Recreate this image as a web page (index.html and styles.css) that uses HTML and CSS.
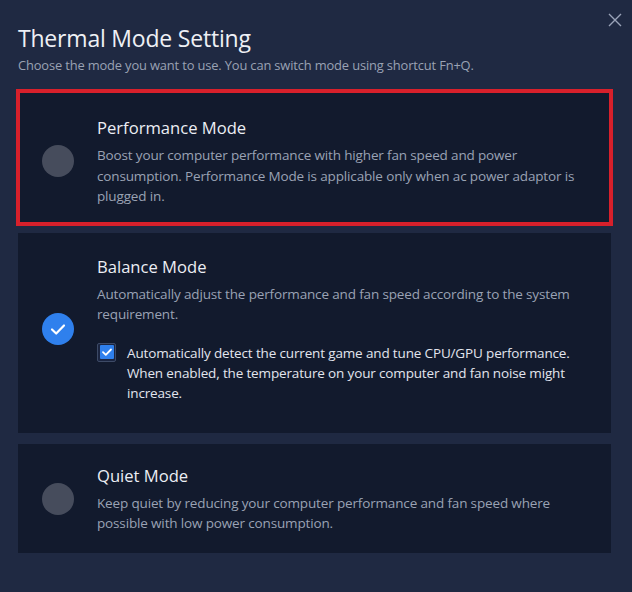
FILE: index.html
```html
<!DOCTYPE html>
<html lang="en">
<head>
<meta charset="utf-8">
<title>Thermal Mode Setting</title>
<link rel="stylesheet" href="styles.css">
</head>
<body>
<div class="dialog">
  <button class="close" aria-label="Close">
    <svg width="14" height="14" viewBox="0 0 14 14"><path d="M1 1 L13 13 M13 1 L1 13" stroke="#9aa3b8" stroke-width="1.4" fill="none"/></svg>
  </button>
  <h1 class="title">Thermal Mode Setting</h1>
  <p class="subtitle">Choose the mode you want to use. You can switch mode using shortcut Fn+Q.</p>

  <div class="modes">
    <div class="card card-highlight">
      <span class="radio"></span>
      <div class="body">
        <div class="name">Performance Mode</div>
        <div class="desc">Boost your computer performance with higher fan speed and power<br>consumption. Performance Mode is applicable only when ac power adaptor is<br>plugged in.</div>
      </div>
    </div>

    <div class="card card-balance">
      <span class="radio radio-on">
        <svg width="32" height="32" viewBox="0 0 32 32"><path d="M10 16.5 L14.2 20.5 L22 12.5" stroke="#fff" stroke-width="2.2" fill="none" stroke-linecap="round" stroke-linejoin="round"/></svg>
      </span>
      <div class="body">
        <div class="name">Balance Mode</div>
        <div class="desc">Automatically adjust the performance and fan speed according to the system<br>requirement.</div>
        <div class="option">
          <span class="checkbox">
            <span class="checkbox-fill">
              <svg width="14" height="14" viewBox="0 0 14 14"><path d="M3 7.2 L5.8 9.8 L11 4.5" stroke="#fff" stroke-width="1.8" fill="none" stroke-linecap="round" stroke-linejoin="round"/></svg>
            </span>
          </span>
          <span class="option-text">Automatically detect the current game and tune CPU/GPU performance.<br>When enabled, the temperature on your computer and fan noise might<br>increase.</span>
        </div>
      </div>
    </div>

    <div class="card card-quiet">
      <span class="radio"></span>
      <div class="body">
        <div class="name">Quiet Mode</div>
        <div class="desc">Keep quiet by reducing your computer performance and fan speed where<br>possible with low power consumption.</div>
      </div>
    </div>
  </div>
</div>
</body>
</html>
```

FILE: styles.css
```css
html, body {
  margin: 0;
  padding: 0;
  background: #1f2942;
}
body {
  font-family: "Open Sans", "Noto Sans", sans-serif;
  color: #e6e9f0;
  width: 632px;
  height: 592px;
  overflow: hidden;
}
.dialog {
  position: relative;
  padding: 22px 21px 0 18px;
}
.close {
  position: absolute;
  top: 12px;
  right: 9px;
  width: 16px;
  height: 16px;
  padding: 0;
  border: 0;
  background: transparent;
  display: flex;
  align-items: center;
  justify-content: center;
}
.title {
  margin: 0;
  font-size: 23px;
  font-weight: 400;
  line-height: 32px;
  color: #eef0f5;
  letter-spacing: -0.2px;
}
.subtitle {
  margin: 2px 0 0;
  font-size: 12.9px;
  line-height: 18px;
  color: #9aa2b4;
  letter-spacing: -0.15px;
  white-space: nowrap;
}
.modes {
  margin-top: 15px;
  display: flex;
  flex-direction: column;
}
.card {
  background: #121a2d;
  display: flex;
  align-items: center;
  padding: 0 16px 0 24px;
}
.card-highlight {
  margin: 0 -2px;
  border: 4px solid #d7202b;
  padding: 23px 14px 15px 22px;
}
.card-balance {
  margin-top: 7px;
  padding-top: 22px;
  padding-bottom: 30px;
}
.card-quiet {
  margin-top: 11px;
  padding-top: 20px;
  padding-bottom: 19px;
}
.radio {
  flex: none;
  width: 32px;
  height: 32px;
  border-radius: 50%;
  background: #464c5c;
  margin-right: 23px;
}
.radio-on {
  background: #2f80ed;
  display: flex;
}
.body {
  flex: 1;
  min-width: 0;
}
.name {
  font-size: 16.6px;
  line-height: 24px;
  color: #eceef4;
}
.desc {
  margin-top: 5px;
  font-size: 13.5px;
  line-height: 20.5px;
  color: #9aa2b4;
  letter-spacing: -0.15px;
  white-space: nowrap;
}
.option {
  display: flex;
  align-items: flex-start;
  margin-top: 18px;
}
.checkbox {
  flex: none;
  width: 19px;
  height: 19px;
  box-sizing: border-box;
  border: 1px solid #3d4a66;
  border-radius: 2px;
  background: #1b2540;
  display: flex;
  align-items: center;
  justify-content: center;
  margin-top: 0;
  margin-right: 11px;
}
.checkbox-fill {
  width: 14px;
  height: 14px;
  background: #2f80ed;
  border-radius: 1px;
  display: flex;
}
.option-text {
  font-size: 13.5px;
  line-height: 20px;
  color: #e2e5ee;
  letter-spacing: -0.15px;
  white-space: nowrap;
}
```
